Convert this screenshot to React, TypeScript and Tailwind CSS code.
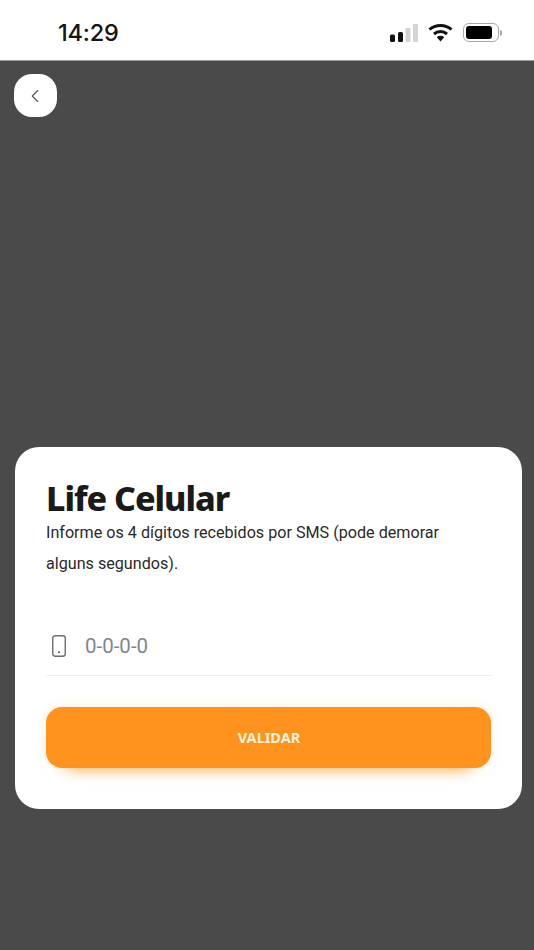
import React from 'react';
import { ChevronLeft } from 'lucide-react';

const StatusIcons = () => (
  <div className="flex items-center gap-[10px]">
    {/* signal */}
    <svg width="28" height="18" viewBox="0 0 28 18">
      <rect x="0" y="10.5" width="5" height="7.5" rx="1.5" fill="#111" />
      <rect x="8" y="8" width="5" height="10" rx="1.5" fill="#111" />
      <rect x="15.5" y="4" width="5" height="14" rx="1" fill="#d4d4d4" />
      <rect x="23" y="0" width="5" height="18" rx="1" fill="#d4d4d4" />
    </svg>
    {/* wifi */}
    <svg width="25" height="19" viewBox="0 0 25 19">
      <path d="M1.5 6.5C7.5 1 17.5 1 23.5 6.5" fill="none" stroke="#111" strokeWidth="3" />
      <path d="M6 11C9.8 7.8 15.2 7.8 19 11" fill="none" stroke="#111" strokeWidth="3" />
      <path d="M8.8 14.2C11 12.4 14 12.4 16.2 14.2L12.5 18.5Z" fill="#111" />
    </svg>
    {/* battery */}
    <div className="flex items-center">
      <div className="w-[36px] h-[19px] rounded-[6px] border-[1.5px] border-[#a8a8a8] p-[2px]">
        <div className="w-[26px] h-full rounded-[3px] bg-black" />
      </div>
      <div className="w-[2px] h-[6px] ml-[1px] rounded-r-full bg-[#a8a8a8]" />
    </div>
  </div>
);

const App = () => {
  return (
    <div className="w-[534px] h-[950px] flex flex-col bg-[#4a4a4a] overflow-hidden font-['Roboto',sans-serif]">
      {/* Status bar */}
      <div className="h-[61px] bg-white flex items-center justify-between pl-[58px] pr-[32px] pt-[5px] shrink-0 border-b border-[#9a9a9a]">
        <span className="text-[23.5px] leading-none font-medium text-[#161616] font-['Inter',sans-serif] tracking-[-0.2px]">14:29</span>
        <StatusIcons />
      </div>

      {/* Back */}
      <div className="pl-[14px] pt-[13px] h-[386px] shrink-0">
        <button className="w-[43px] h-[43px] rounded-[18px] bg-white flex items-center justify-center">
          <ChevronLeft className="w-[22px] h-[22px] text-[#555] -ml-[1px]" strokeWidth={1.25} />
        </button>
      </div>

      {/* Card */}
      <div className="ml-[15px] w-[507px] h-[362px] rounded-[24px] bg-white pt-[30px] px-[31px]">
        <h1 className="text-[34px] leading-[42px] font-extrabold text-[#1a1a1a] font-['Noto_Sans',sans-serif] tracking-[-1px]">Life Celular</h1>
        <p className="w-[420px] text-[16.15px] leading-[31px] text-[#2a2a2a] -mt-[2px]">
          Informe os 4 dígitos recebidos por SMS (pode demorar alguns segundos).
        </p>

        <div className="mt-[38px] h-[59px] w-[445px] flex items-center border-b border-[#efefef] pl-[6px]">
          <svg width="14" height="22" viewBox="0 0 14 22" fill="none">
            <rect x="0.75" y="0.75" width="12.5" height="20.5" rx="2.5" stroke="#6f6f6f" strokeWidth="1.4" />
            <circle cx="7" cy="17.2" r="1" fill="#555" />
          </svg>
          <span className="ml-[19px] text-[20.5px] text-[#83868a]">0-0-0-0</span>
        </div>

        <button className="mt-[31px] w-[445px] h-[61px] rounded-[16px] bg-[#ff931e] shadow-[0_22px_16px_-22px_rgba(255,147,30,0.9),0_0_12px_rgba(255,147,30,0.16)] flex items-center justify-center">
          <span className="text-[14.5px] font-bold text-[#fff3df] font-['Noto_Sans',sans-serif] ml-[1px]">VALIDAR</span>
        </button>
      </div>
    </div>
  );
};

export default App;
